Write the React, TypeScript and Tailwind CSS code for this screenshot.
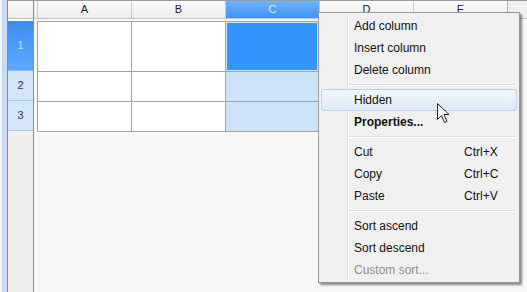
import { ReactNode } from 'react';

const cols = ['A', 'B', 'C', 'D', 'E'];

function MenuItem({ children, shortcut, bold, disabled, active }: { children: ReactNode; shortcut?: string; bold?: boolean; disabled?: boolean; active?: boolean }) {
  return (
    <div
      className={
        'mx-[2px] h-[22px] flex items-center pl-[32px] pr-[16px] rounded-[3px] border ' +
        (active ? 'border-[#b9d3ee] bg-gradient-to-b from-[#f3f8fd] to-[#dde9f6]' : 'border-transparent')
      }
    >
      <span className={(bold ? 'font-bold ' : '') + (disabled ? 'text-[#8d8d8d]' : 'text-[#111]')}>{children}</span>
      {shortcut && <span className="ml-auto w-[36px] text-[#111]">{shortcut}</span>}
    </div>
  );
}

function Sep() {
  return (
    <div className="h-[8px] flex flex-col justify-center pl-[30px] pr-[4px]">
      <div className="h-px bg-[#e0e0e0]" />
      <div className="h-px bg-white" />
    </div>
  );
}

export default function App() {
  return (
    <div className="w-[527px] h-[292px] relative overflow-hidden bg-[#f7f7f7] flex font-['Liberation_Sans',Arial,sans-serif]">
      {/* window frame */}
      <div className="w-[7px] flex">
        <div className="w-[2px] bg-[#eef3f9]" />
        <div className="flex-1 bg-[#c6daf2]" />
      </div>
      <div className="w-px bg-[#8a8a8a]" />

      <div className="flex-1 flex flex-col">
        <div className="h-px bg-[#9a9a9a]" />
        <div className="flex flex-1">
          {/* row headers */}
          <div className="w-[26px] flex flex-col bg-[#efefef] border-r border-[#8c8c8c] text-[11px]">
            <div className="h-[18px] bg-gradient-to-b from-[#fbfbfb] to-[#ececec] border-b border-[#c5c5c5]" />
            <div className="h-[2px] bg-[#fafafa]" />
            <div className="h-[50px] bg-gradient-to-b from-[#3d8ef0] to-[#5ea8ff] border-b border-[#8fbbe6] flex items-center justify-center text-[#cfe4ff]">1</div>
            <div className="h-[30px] bg-[#d3e5f8] border-b border-[#a9c6e3] flex items-center justify-center text-[#2a3a4c]">2</div>
            <div className="h-[30px] bg-[#d3e5f8] border-b border-[#a9c6e3] flex items-center justify-center text-[#2a3a4c]">3</div>
          </div>

          {/* grid */}
          <div className="flex-1 flex flex-col">
            <div className="h-[18px] flex bg-gradient-to-b from-[#fbfbfb] to-[#ececec] border-b border-[#c5c5c5] pl-[3px] text-[11px] text-[#222]">
              {cols.map((c) => (
                <div
                  key={c}
                  className={
                    'w-[94px] shrink-0 border-l border-[#c9c9c9] flex items-center justify-center ' +
                    (c === 'C' ? 'bg-gradient-to-b from-[#6fb4ff] to-[#3f93f3] text-[#d8ebff]' : '')
                  }
                >
                  {c}
                </div>
              ))}
              <div className="flex-1 border-l border-[#b5b5b5] bg-[#f0f0f0]" />
            </div>
            <div className="h-[2px]" />
            <div className="pl-[3px] flex">
              <div className="grid grid-cols-[94px_94px_92px] border-t border-l border-[#a3a3a3]">
                <div className="h-[50px] bg-white border-r border-b border-[#a3a3a3]" />
                <div className="h-[50px] bg-white border-r border-b border-[#a3a3a3]" />
                <div className="h-[50px] bg-[#cfe5f8] border-b border-[#a3a3a3] p-px">
                  <div className="h-full bg-[#3394fb]" />
                </div>
                <div className="h-[30px] bg-white border-r border-b border-[#a3a3a3]" />
                <div className="h-[30px] bg-white border-r border-b border-[#a3a3a3]" />
                <div className="h-[30px] bg-[#cde4f8] border-b border-[#a3a3a3]" />
                <div className="h-[30px] bg-white border-r border-b border-[#a3a3a3]" />
                <div className="h-[30px] bg-white border-r border-b border-[#a3a3a3]" />
                <div className="h-[30px] bg-[#cde4f8] border-b border-[#a3a3a3]" />
              </div>
            </div>
          </div>
        </div>
      </div>

      {/* context menu */}
      <div className="absolute left-[318px] top-[12px] w-[202px] h-[271px] bg-[#f0f0f0] border border-[#979797] shadow-[2px_2px_2px_rgba(0,0,0,0.45)] text-[12px] pt-[2px]">
        <div className="absolute left-[28px] top-[2px] bottom-[2px] w-[2px] flex">
          <div className="w-px bg-[#e6e6e6]" />
          <div className="w-px bg-white" />
        </div>
        <div className="relative">
          <MenuItem>Add column</MenuItem>
          <MenuItem>Insert column</MenuItem>
          <MenuItem>Delete column</MenuItem>
          <Sep />
          <MenuItem active>Hidden</MenuItem>
          <MenuItem bold>Properties...</MenuItem>
          <Sep />
          <MenuItem shortcut="Ctrl+X">Cut</MenuItem>
          <MenuItem shortcut="Ctrl+C">Copy</MenuItem>
          <MenuItem shortcut="Ctrl+V">Paste</MenuItem>
          <Sep />
          <MenuItem>Sort ascend</MenuItem>
          <MenuItem>Sort descend</MenuItem>
          <MenuItem disabled>Custom sort...</MenuItem>
        </div>
      </div>

      {/* mouse cursor */}
      <svg className="absolute left-[437px] top-[103px]" width="14" height="22" viewBox="0 0 14 22">
        <path d="M0.5 0.5 L0.5 16.5 L4.5 12.5 L7.5 19.5 L10 18.5 L7 11.5 L12 11.5 Z" fill="white" stroke="#222" strokeWidth="1" strokeLinejoin="round" />
      </svg>
    </div>
  );
}
